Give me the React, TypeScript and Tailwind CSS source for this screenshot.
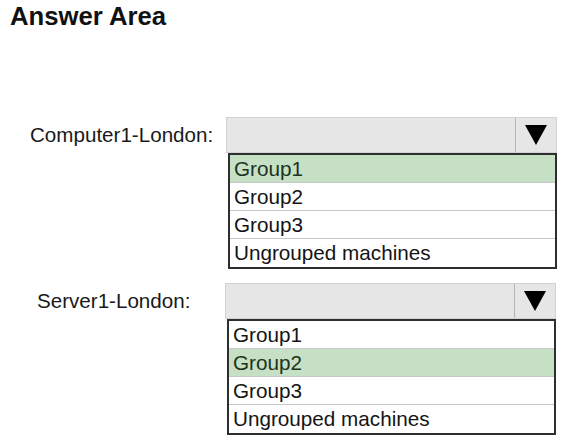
import React from "react";

const font = { fontFamily: '"Liberation Sans", Arial, sans-serif' };

function Dropdown({ selected }: { selected: number }) {
  const opts = ["Group1", "Group2", "Group3", "Ungrouped machines"];
  return (
    <div className="w-[331px]">
      <div className="flex h-[36px] border border-[#d2d2d2] bg-[#e6e6e6]">
        <div className="flex-1" />
        <div className="flex w-[41px] items-center justify-center border-l border-[#b5b5b5]">
          <svg width="22" height="20" viewBox="0 0 22 20">
            <polygon points="0,0 22,0 11,20" fill="#000" />
          </svg>
        </div>
      </div>
      <div className="ml-[2px] border-2 border-[#2e2e2e] bg-white">
        {opts.map((o, i) => (
          <div
            key={o}
            className={`h-[28px] pl-[4px] text-[20.7px] leading-[28px] ${
              i < opts.length - 1 ? "border-b border-[#c8c8c8]" : ""
            } ${i === selected ? "bg-[#c6e0c6] text-[#1c331c]" : "text-[#141414]"}`}
          >
            {o}
          </div>
        ))}
      </div>
    </div>
  );
}

export default function App() {
  return (
    <div className="h-[440px] w-[566px] bg-white" style={font}>
      <div className="pl-[10px] pt-[2px] text-[25.7px] font-bold leading-[29px] text-[#111]">
        Answer Area
      </div>
      <div className="mt-[86px] flex">
        <div className="flex h-[36px] w-[226px] items-center pl-[30px] text-[20.6px] text-[#1a1a1a]">
          Computer1-London:
        </div>
        <Dropdown selected={0} />
      </div>
      <div className="mt-[14px] flex">
        <div className="flex h-[36px] w-[225px] items-center pl-[37px] text-[20.6px] text-[#1a1a1a]">
          Server1-London:
        </div>
        <Dropdown selected={1} />
      </div>
    </div>
  );
}
